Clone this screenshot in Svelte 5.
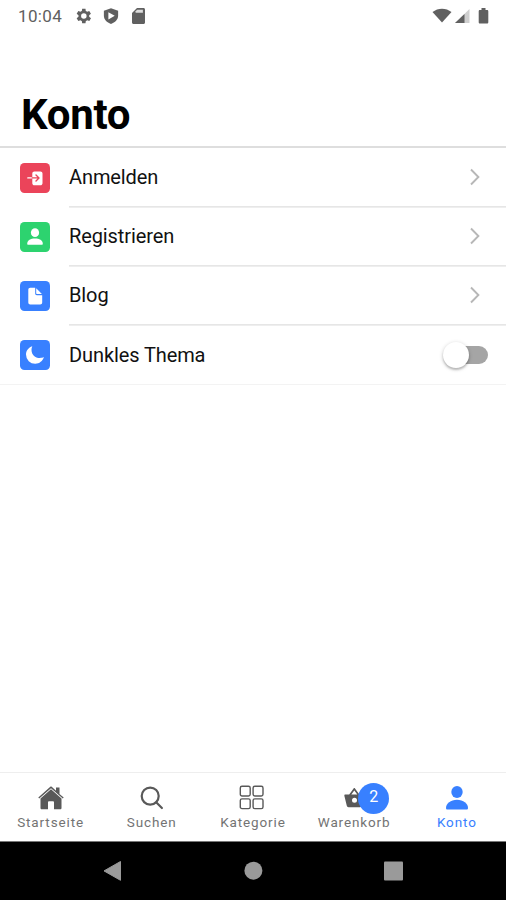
<script>
  const rows = [
    { icon: 'login', color: '#eb445a', label: 'Anmelden' },
    { icon: 'person', color: '#2dd36f', label: 'Registrieren' },
    { icon: 'doc', color: '#3880ff', label: 'Blog' },
    { icon: 'moon', color: '#3880ff', label: 'Dunkles Thema' }
  ];
  const tabs = [
    { icon: 'home', label: 'Startseite' },
    { icon: 'search', label: 'Suchen' },
    { icon: 'grid', label: 'Kategorie' },
    { icon: 'basket', label: 'Warenkorb', badge: 2 },
    { icon: 'person', label: 'Konto', active: true }
  ];
</script>

<div class="screen">
  <div class="status">
    <span class="time">10:04</span>
    <svg class="gear" width="20" height="20" viewBox="0 0 24 24"><path fill-rule="evenodd" d="M19.400 13c.1-.7.1-1.300 0-2l2.100-1.600-2-3.500-2.500 1a8 8 0 0 0-1.700-1L15 3.200h-4l-.4 2.700a8 8 0 0 0-1.700 1l-2.500-1-2 3.500L6.600 11a8 8 0 0 0 0 2l-2.200 1.600 2 3.500 2.500-1c.5.400 1.100.8 1.700 1l.4 2.700h4l.4-2.700c.6-.2 1.200-.6 1.700-1l2.500 1 2-3.500zM13 8.700a3.300 3.300 0 1 1 0 6.600 3.300 3.300 0 0 1 0-6.600z" /></svg>
    <svg class="shield" width="18" height="18" viewBox="0 0 24 24"><path fill-rule="evenodd" d="M12 1.500 21.500 5v6.500c0 5-4 9-9.500 11-5.500-2-9.500-6-9.500-11V5zM8.500 7v9.500l8.500-4.700z" /></svg>
    <svg class="sd" width="13" height="17" viewBox="0 0 13 17"><path d="M5 0h6.500C12.300 0 13 .6 13 1.500v13c0 .9-.7 1.500-1.500 1.500h-10C.7 16 0 15.400 0 14.500V5z" /><path d="M3.600 4.800V3.300l1.500-1.500h5.800v3z" fill="#ddd" /></svg>
    <span class="space"></span>
    <svg class="wifi" width="20" height="16" viewBox="0 0 20 16"><path d="M.5 4C6-.5 14-.5 19.500 4L10 14.500z" /></svg>
    <svg class="signal" width="15" height="15" viewBox="0 0 15 15"><path d="M0 14 14.500 0v14z" fill="#cfcfcf" /><path d="m0 14 9.500-9v9z" /></svg>
    <svg class="battery" width="11" height="17" viewBox="0 0 11 17"><path d="M3.500 0h4v2H9c.8 0 1.300.5 1.300 1.300v11c0 .8-.5 1.300-1.300 1.300H2c-.8 0-1.300-.5-1.300-1.300v-11C.7 2.500 1.200 2 2 2h1.500z" /></svg>
  </div>

  <header><h1>Konto</h1></header>

  <main>
    {#each rows as row}
      <div class="row">
        <span class="tile" style:background={row.color}>
          {#if row.icon === 'login'}
            <svg width="30" height="30" viewBox="0 0 30 30"><path d="M12.300 13.800V10.600c0-1.200.9-2.100 2.100-2.100h6c1.200 0 2.100.9 2.100 2.100v9.600c0 1.200-.9 2.100-2.100 2.100h-6c-1.200 0-2.100-.9-2.100-2.100v-4.300z" fill="#fff" /><path d="M7.800 14.900h4.500" stroke="#fff" stroke-width="1.300" stroke-linecap="round" /><path d="M12.300 14.900h6.400m-2.700-3 3 3-3 3" stroke="#eb445a" stroke-width="1.400" fill="none" stroke-linecap="round" stroke-linejoin="round" /></svg>
          {:else if row.icon === 'person'}
            <svg width="30" height="30" viewBox="0 0 30 30"><ellipse cx="15" cy="10.700" rx="4.100" ry="4.400" fill="#fff" /><path d="M7.200 21.700c0-3.500 3.500-5.300 7.800-5.300s7.800 1.800 7.800 5.300c0 .7-.4 1.100-1 1.100H8.200c-.6 0-1-.4-1-1.100z" fill="#fff" /></svg>
          {:else if row.icon === 'doc'}
            <svg width="30" height="30" viewBox="0 0 30 30"><path d="M15.200 6.800v5.800c0 1 .7 1.700 1.700 1.700h5.300v7.200c0 1.200-.8 2-2 2h-9.900c-1.200 0-2-.8-2-2V8.800c0-1.200.8-2 2-2z" fill="#fff" /><path d="m16.200 7.200 5.700 5.700h-4.700c-.7 0-1-.3-1-1z" fill="#fff" /></svg>
          {:else}
            <svg width="30" height="30" viewBox="0 0 30 30"><path d="M12.300 6.200c-.6 1.200-.8 2.300-.8 3.500 0 5 3.500 8.300 8.400 8.300 1.500 0 2.800-.2 4-.9-1.200 4-4.500 6.700-8.600 6.700A9.200 9.200 0 0 1 6 14.600c0-4 2.500-7.200 6.300-8.400z" fill="#fff" /></svg>
          {/if}
        </span>
        <div class="body">
          <span class="label">{row.label}</span>
          {#if row.icon === 'moon'}
            <span class="toggle"><span class="knob"></span></span>
          {:else}
            <svg class="chevron outline" width="12" height="18" viewBox="0 0 12 18"><path d="m2 1.500 7.400 7.500L2 16.500" stroke="#b7b7b7" stroke-width="1.900" /></svg>
          {/if}
        </div>
      </div>
    {/each}
  </main>

  <nav>
    {#each tabs as tab}
      <div class="tab" class:active={tab.active}>
        <span class="icon">
          {#if tab.icon === 'home'}
            <svg width="28" height="28" viewBox="0 0 28 28"><path d="m1.300 13.600 12-10.800c.5-.4.900-.4 1.400 0l4.300 3.900V3.600h3.500v6.300l4.200 3.700-.9 1L14 4.200 2.200 14.600z" /><path d="M14 5.300 24.500 14.600V24c0 .8-.5 1.300-1.300 1.300H17v-7c0-.7-.5-1.100-1.100-1.100h-3.800c-.6 0-1.100.4-1.100 1.100v7H4.800c-.8 0-1.300-.5-1.300-1.300v-9.400z" /></svg>
          {:else if tab.icon === 'search'}
            <svg class="outline" width="28" height="28" viewBox="0 0 28 28" stroke="currentColor" stroke-width="2.200" stroke-linecap="round"><circle cx="12.200" cy="12.100" r="8.500" /><path d="m18.400 18.400 5.500 5.600" /></svg>
          {:else if tab.icon === 'grid'}
            <svg class="outline" width="28" height="28" viewBox="0 0 28 28" stroke="currentColor" stroke-width="1.400"><rect x="1.300" y="2.300" width="9.900" height="9.700" rx="1.700" /><rect x="14.100" y="2.300" width="9.900" height="9.700" rx="1.700" /><rect x="1.300" y="14.900" width="9.900" height="9.700" rx="1.700" /><rect x="14.100" y="14.900" width="9.900" height="9.700" rx="1.700" /></svg>
          {:else if tab.icon === 'basket'}
            <svg width="28" height="28" viewBox="0 0 28 28"><path fill-rule="evenodd" d="M5.200 10.600h4L13.600 4.400c.4-.5 1-.5 1.400 0l4.400 6.200h3.500c.7 0 1.100.6.9 1.300l-2.200 9.900c-.2.9-.8 1.400-1.700 1.400H8.500c-.9 0-1.500-.5-1.700-1.400L4.400 11.900c-.2-.7.1-1.300.8-1.300zM11.300 10.600h6L14.300 6.400zM14.500 13.800a2.500 2.500 0 1 0 0 5 2.500 2.500 0 0 0 0-5z" /></svg>
          {:else}
            <svg width="28" height="28" viewBox="0 0 28 28"><ellipse cx="14" cy="7.900" rx="5.700" ry="6" /><path d="M3 23.900c0-4.500 4.700-8.200 11-8.200s11 3.700 11 8.200c0 1-.6 1.500-1.500 1.500h-19c-.9 0-1.500-.5-1.500-1.500z" /></svg>
          {/if}
          {#if tab.badge}<span class="badge">{tab.badge}</span>{/if}
        </span>
        <span class="name">{tab.label}</span>
      </div>
    {/each}
  </nav>

  <footer>
    <svg width="20" height="22" viewBox="0 0 20 22"><path d="M18.500 1.500v18.800L2 10.900z" stroke="#9a9a9a" stroke-linejoin="round" /></svg>
    <svg width="20" height="22" viewBox="0 0 20 22"><circle cx="10.400" cy="10.700" r="9" /></svg>
    <svg width="20" height="22" viewBox="0 0 20 22"><rect x="0" y="1.500" width="19" height="19" rx="1" /></svg>
  </footer>
</div>

<style>
  :global(body) { margin: 0; background: #fff; }
  .screen { width: 506px; height: 900px; display: flex; flex-direction: column; background: #fff; font-family: Roboto, sans-serif; overflow: hidden; color: #111; }
  svg { display: block; flex: none; fill: currentColor; }
  .outline { fill: none; }
  .status { height: 32px; display: flex; align-items: center; color: #606060; padding: 0 16px 0 18px; box-sizing: border-box; }
  .time { font-size: 17px; letter-spacing: .35px; width: 55px; font-weight: 400; }
  .shield { margin-left: 9px; }
  .sd { margin-left: 12px; }
  .space { flex: 1; }
  .signal { margin-left: 3px; margin-right: 8px; }
  .battery { margin-right: 1px; }
  header { box-sizing: border-box; height: 116px; padding: 58px 21px 0; border-bottom: 2px solid #dedede; }
  h1 { margin: 0; font-size: 42px; line-height: 50px; font-weight: 700; letter-spacing: -.3px; color: #000; }
  main { flex: 1; }
  .row { height: 59px; display: flex; align-items: center; padding-left: 20px; }
  .tile { width: 30px; height: 30px; border-radius: 4.500px; flex: none; }
  .body { flex: 1; height: 100%; box-sizing: border-box; margin-left: 19px; padding-right: 18px; padding-bottom: 1px; display: flex; align-items: center; box-shadow: 0 1px #eee, inset 0 -1px #e6e6e6; }
  .row:last-child { box-shadow: 0 1px #f3f3f3; }
  .row:last-child .body { box-shadow: none; padding-bottom: 0; }
  .label { flex: 1; font-size: 20px; line-height: 24px; letter-spacing: -.1px; }
  .chevron { margin-right: 7px; }
  .toggle { width: 43px; height: 18px; border-radius: 9px; background: linear-gradient(90deg, transparent 10px, #a5a5a5 10px); position: relative; }
  .knob { position: absolute; left: -2px; top: -4px; width: 26px; height: 26px; border-radius: 50%; background: #fff; box-shadow: 0 2px 2px rgba(0,0,0,.18), 0 1px 4px rgba(0,0,0,.2); }
  nav { height: 70px; box-sizing: border-box; border-top: 1px solid #eee; border-bottom: 1px solid #777; display: flex; color: #595959; }
  .tab { width: 20%; box-sizing: border-box; display: flex; flex-direction: column; align-items: center; padding-top: 11px; }
  .tab:last-child { padding-left: 3px; }
  .icon { position: relative; }
  .name { font-size: 13.500px; line-height: 18px; margin-top: 1px; letter-spacing: .88px; color: #737373; white-space: nowrap; }
  .active, .active .name { color: #3880ff; }
  .badge { position: absolute; left: 18px; top: -1px; width: 31px; height: 31px; border-radius: 50%; background: #3880ff; color: #fff; font-size: 16px; line-height: 28px; text-align: center; }
  footer { height: 58px; background: #000; color: #9a9a9a; display: flex; justify-content: space-between; align-items: center; padding: 0 102px; box-sizing: border-box; }
</style>
